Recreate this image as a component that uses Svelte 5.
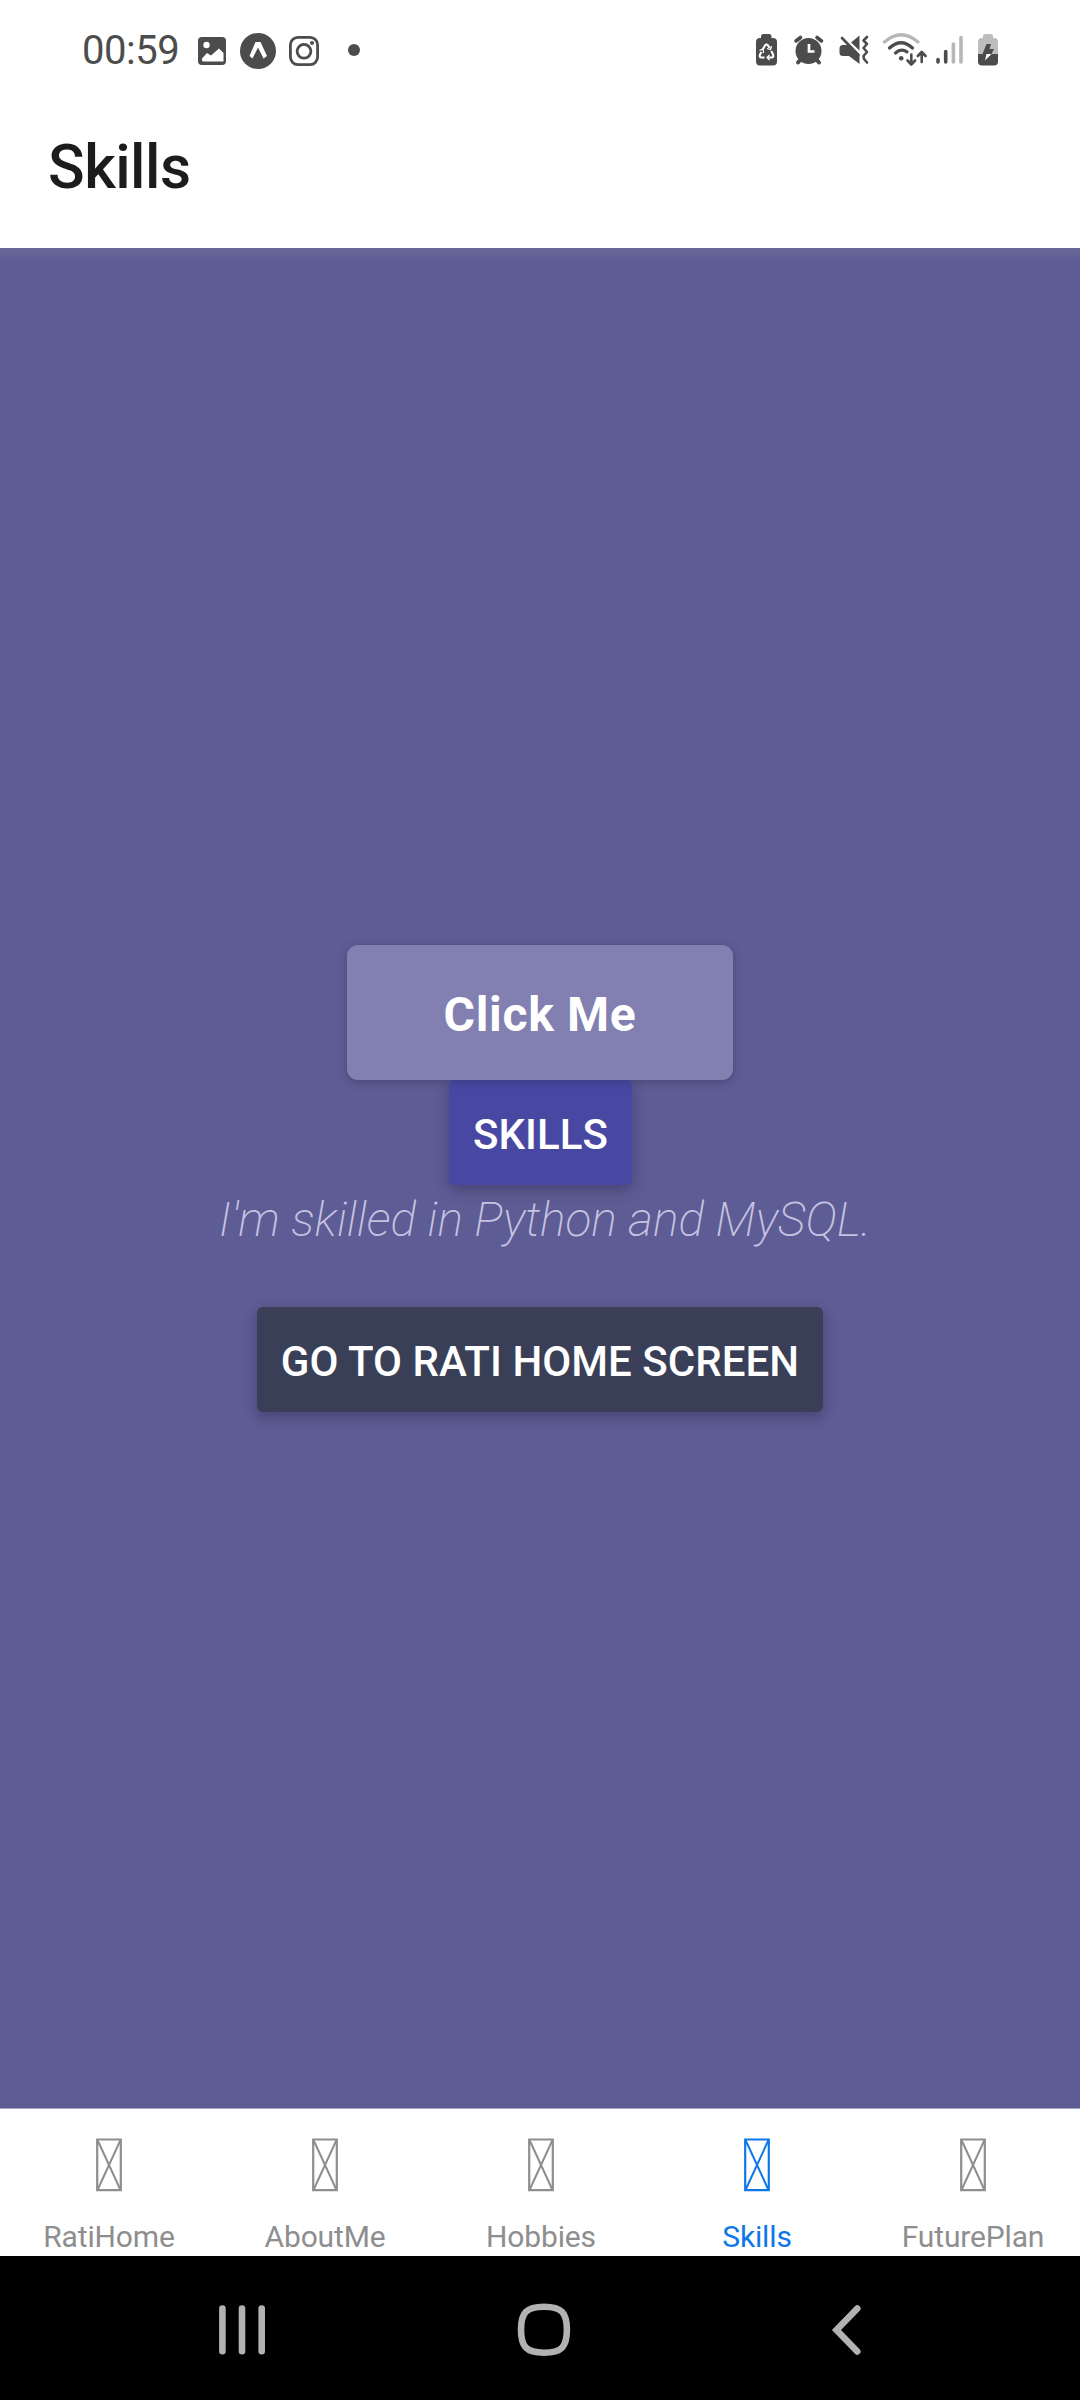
<script>
  const tabs = ['RatiHome', 'AboutMe', 'Hobbies', 'Skills', 'FuturePlan'];
  let active = $state('Skills');
</script>

<div class="screen">
  <div class="status">
    <span class="time">00:59</span>
    <svg class="left-icons" width="170" height="40" viewBox="195 31 170 40">
      <rect x="198" y="37" width="28" height="28" rx="4" fill="#4c4c4c" />
      <circle cx="206.5" cy="45" r="3.2" fill="#fff" />
      <path d="M202 58.5L207 53L211 55.5L219 48.5L223.5 53V61.5H203.5Q201.5 61.5 202 58.5Z" fill="#fff" />
      <circle cx="258" cy="51" r="18" fill="#4c4c4c" />
      <path d="M255.500 42H260.500L267 56L263.500 58.500L258 47.500L252.500 58.500L249.500 56Z" fill="#fff" />
      <rect x="290.4" y="37.4" width="27.2" height="27.2" rx="7.5" fill="none" stroke="#4c4c4c" stroke-width="2.8" />
      <circle cx="304" cy="51.3" r="6.9" fill="none" stroke="#4c4c4c" stroke-width="2.8" />
      <circle cx="312" cy="43" r="2" fill="#4c4c4c" />
      <circle cx="354" cy="50" r="6" fill="#4c4c4c" />
    </svg>
    <svg class="right-icons" width="250" height="40" viewBox="752 31 250 40" fill="none" stroke="#4c4c4c">
      <path d="M761 38V36.500Q761 34 763.500 34H769Q771.500 34 771.500 36.500V38H773Q777 38 777 42V61.500Q777 65.500 773 65.500H760Q756 65.500 756 61.500V42Q756 38 760 38Z" fill="#4c4c4c" stroke="none" />
      <path d="M762.600 49.500L765 45.500Q766.500 43.500 768 45.500L769.600 48M771.300 51L773 54.500Q774 57.500 771.500 57.500H768M764.500 57.500H761.500Q759 57.500 760 54.500L761.500 52" stroke="#fff" stroke-width="2.100" />
      <path d="M759.500 50.500L763 49L763.500 53M771.500 46L770.500 49.500L767 48.500M769.500 55L767 57.500L769.500 60" stroke="#fff" stroke-width="1.300" />

      <circle cx="808.500" cy="51" r="13" fill="#4c4c4c" stroke="none" />
      <path d="M796 41L800.500 37.500M817 37.500L821.500 41" stroke-width="3.600" stroke-linecap="round" />
      <path d="M801 59L798 62.500M816 59L819 62.500" stroke-width="4" stroke-linecap="round" />
      <path d="M809 44V51.500H814.500" stroke="#fff" stroke-width="2.700" />

      <path d="M843 45H849L859.500 55V64L849 56H843Q839.500 56 839.500 52.500V48.500Q839.500 45 843 45Z" fill="#4c4c4c" stroke="none" />
      <path d="M851 42.500L859.500 35.500V50.500Z" fill="#4c4c4c" stroke="none" />
      <path d="M842 38L858.500 55" stroke-width="2.600" stroke-linecap="round" />
      <path d="M867 37L863.500 40.500L867 44L863.500 48L867 52L863.500 56L864 59L867 62.500" stroke-width="2.600" stroke-linejoin="round" stroke-linecap="round" />

      <path d="M884.500 42Q901 27.500 918 42" stroke="#b7b7b7" stroke-width="3.200" stroke-linecap="round" />
      <path d="M889.500 48Q901 37.500 912.500 48" stroke-width="3.200" stroke-linecap="round" />
      <path d="M895.500 53Q901 48 907 51.800" stroke-width="3.200" stroke-linecap="round" />
      <circle cx="901.200" cy="58.300" r="2.300" fill="#4c4c4c" stroke="none" />
      <path d="M911.300 54.500V64M907.500 60.500L911.300 64.500L915.100 60.500M921.700 62V52.500M917.800 56L921.700 52L925.600 56" stroke-width="2.600" stroke-linecap="round" stroke-linejoin="round" />

      <path d="M938 59.500V62M945.700 51.500V62" stroke-width="3.600" stroke-linecap="round" />
      <path d="M953.400 44V62M961 37.500V62" stroke="#b7b7b7" stroke-width="3.600" stroke-linecap="round" />

      <path d="M983 38V36.500Q983 34 985.500 34H990.500Q993 34 993 36.500V38H994Q998 38 998 42V54H978V42Q978 38 982 38Z" fill="#bdbdbd" stroke="none" />
      <path d="M978 54H998V61.500Q998 65.500 994 65.500H982Q978 65.500 978 61.500Z" fill="#4c4c4c" stroke="none" />
      <path d="M986.500 44H991L989.500 49H994L991.500 54H982.500Z" fill="#4c4c4c" stroke="none" />
      <path d="M986.500 54H991.500L985 60.500Z" fill="#fff" stroke="none" />
    </svg>
  </div>

  <header><h1>Skills</h1></header>

  <main>
    <button class="click">Click Me</button>
    <button class="action skills">SKILLS</button>
    <p>I'm skilled in Python and MySQL.</p>
    <button class="action home">GO TO RATI HOME SCREEN</button>
  </main>

  <nav class="tabs">
    {#each tabs as tab}
      <button class="tab" class:active={tab === active} onclick={() => (active = tab)}>
        <svg width="26" height="54" viewBox="0 0 26 54" fill="none" stroke="currentColor">
          <path d="M1.200 1.500H24.800V52.200H1.200Z" stroke-width="2.200" />
          <path d="M1.500 2L24.500 52M24.500 2L1.500 52" stroke-width="2" />
        </svg>
        <span>{tab}</span>
      </button>
    {/each}
  </nav>

  <div class="system">
    <svg width="48" height="54" viewBox="218 2303 48 54" stroke="#b2b2b2" stroke-width="6.600" stroke-linecap="round">
      <path d="M222.400 2308.500V2351.300M242 2308.500V2351.300M261.700 2308.500V2351.300" />
    </svg>
    <svg class="home-key" width="54" height="54" viewBox="517.500 2303 54 54" fill="none" stroke="#b2b2b2" stroke-width="6.600">
      <path d="M544.500 2306.700C562 2306.700 567.400 2312.500 567.400 2329.800C567.400 2347 562 2352.700 544.500 2352.700C527 2352.700 521.500 2347 521.500 2329.800C521.500 2312.500 527 2306.700 544.500 2306.700Z" />
    </svg>
    <svg width="32" height="54" viewBox="830 2303 32 54" fill="none" stroke="#b2b2b2" stroke-width="6.600" stroke-linecap="round">
      <path d="M857.300 2308.500L836.500 2330L857.300 2351.500" />
    </svg>
  </div>
</div>

<style>
  :global(body) {
    margin: 0;
  }
  .screen {
    width: 1080px;
    height: 2400px;
    display: flex;
    flex-direction: column;
    background: #fff;
    font-family: Roboto, 'Liberation Sans', sans-serif;
    overflow: hidden;
  }
  button {
    font-family: inherit;
    border: 0;
    padding: 0;
    margin: 0;
  }
  .status {
    height: 102px;
    box-sizing: border-box;
    padding: 0 78px 0 82px;
    display: flex;
    align-items: center;
    color: #4c4c4c;
  }
  .time {
    width: 113px;
    font-size: 40px;
    line-height: 46px;
    letter-spacing: -0.500px;
    white-space: nowrap;
    padding-bottom: 1px;
  }
  .right-icons {
    margin-left: auto;
  }
  header {
    height: 146px;
    display: flex;
    align-items: center;
    padding-left: 48px;
  }
  h1 {
    margin: 0 0 14px;
    font-size: 60.500px;
    line-height: 72px;
    font-weight: 500;
    letter-spacing: -0.500px;
    color: #1c1c1e;
  }
  main {
    height: 1860px;
    box-sizing: border-box;
    padding-top: 697px;
    display: flex;
    flex-direction: column;
    align-items: center;
    background: linear-gradient(#6a6899, #5e5c94 14px);
  }
  main button {
    box-sizing: border-box;
    color: #fff;
    flex: none;
  }
  .click {
    position: relative;
    z-index: 1;
    width: 386px;
    height: 135px;
    padding-top: 3px;
    border-radius: 11px;
    background: #8280b0;
    font-size: 48px;
    font-weight: 700;
    letter-spacing: 0.700px;
    box-shadow: 0 2px 8px rgba(40, 38, 80, 0.4);
  }
  .action {
    height: 105px;
    padding-top: 3px;
    border-radius: 6px;
    font-size: 42px;
    font-weight: 500;
    letter-spacing: 0.050px;
    box-shadow: 0 5px 14px rgba(40, 38, 80, 0.45);
  }
  .skills {
    width: 183px;
    padding-left: 1px;
    background: #4848a3;
  }
  .home {
    width: 566px;
    background: #383f57;
  }
  p {
    margin: 6px 0 59px;
    height: 57px;
    padding-left: 10px;
    font-size: 48px;
    line-height: 57px;
    font-style: italic;
    font-weight: 200;
    color: #c5c3e2;
    white-space: nowrap;
  }
  .tabs {
    height: 148px;
    box-sizing: border-box;
    border-top: 1px solid #a5a4c2;
    display: grid;
    grid-template-columns: repeat(5, 216px);
    background: #fff;
  }
  .tab {
    display: flex;
    flex-direction: column;
    align-items: center;
    padding: 29px 0 0 2px;
    background: none;
    color: #8e8e8f;
    font-size: 30px;
    line-height: 36px;
    letter-spacing: -0.150px;
  }
  .tab span {
    margin-top: 27px;
    height: 36px;
  }
  .tab.active {
    color: #0e78e8;
  }
  .system {
    height: 144px;
    box-sizing: border-box;
    padding: 3px 218px 0;
    display: flex;
    justify-content: space-between;
    align-items: center;
    background: #000;
  }
  .home-key {
    margin-right: 8px;
  }
</style>
